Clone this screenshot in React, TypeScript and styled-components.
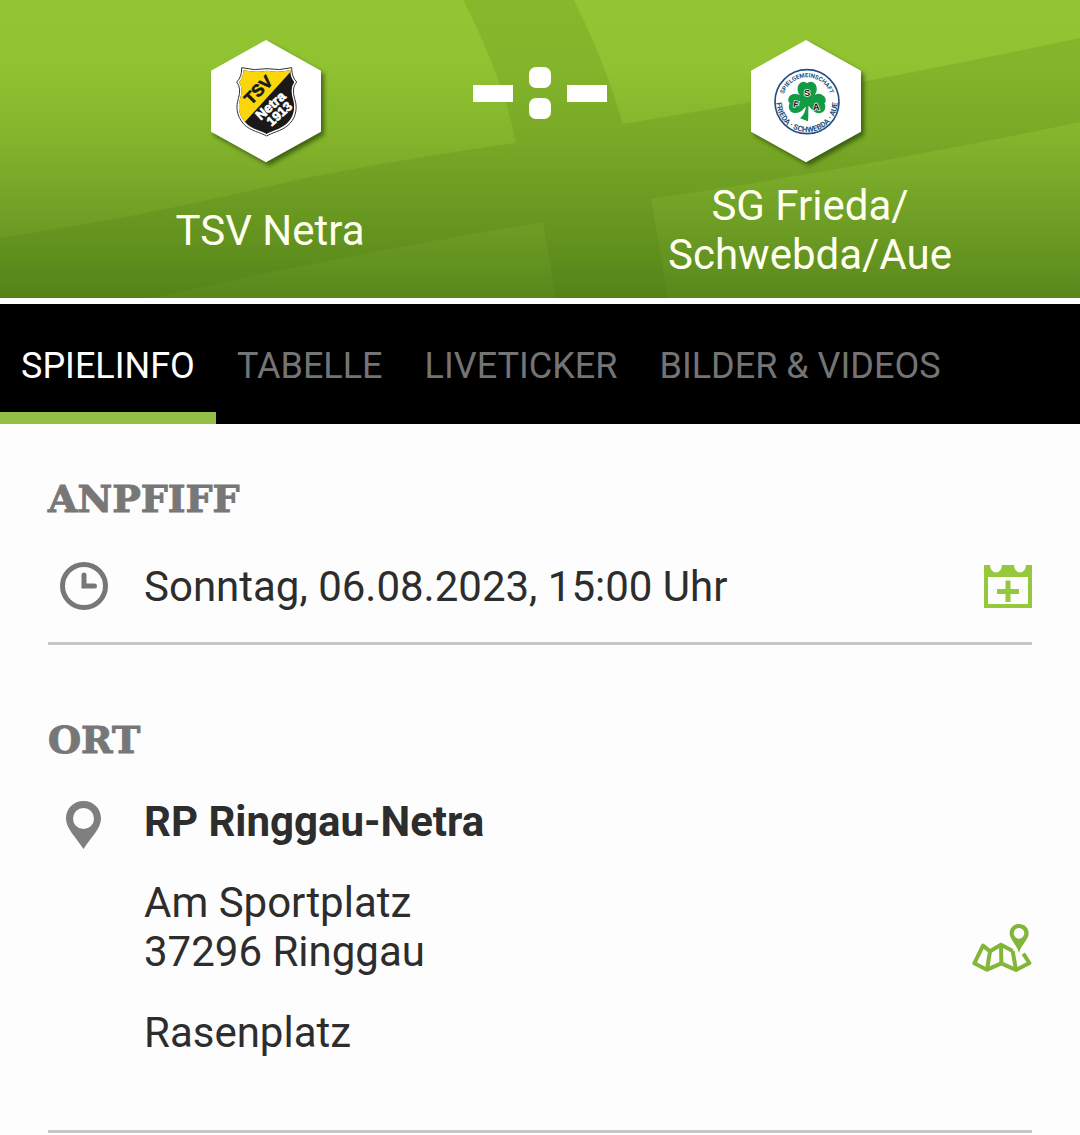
import React, { useState } from "react";
import styled, { createGlobalStyle } from "styled-components";

const GlobalStyle = createGlobalStyle`
  *, *::before, *::after { box-sizing: border-box; }
  body {
    margin: 0;
    background: #fdfdfd;
    color: #2d2d2d;
    font-family: Roboto, "Liberation Sans", sans-serif;
  }
  h2, p { margin: 0; }
  button {
    margin: 0;
    padding: 0;
    border: 0;
    background: none;
    font: inherit;
    color: inherit;
    cursor: pointer;
  }
`;

const MatchHeader = styled.header`
  position: relative;
  isolation: isolate;
  display: grid;
  grid-template-columns: 1fr 1fr;
  grid-template-rows: auto auto;
  row-gap: 19px;
  padding: 40px 0 19px;
  background: linear-gradient(#93c633 0%, #90c231 22%, #82b32b 48%, #73a326 68%, #639320 88%, #57861c 100%);
`;

const Backdrop = styled.svg`
  position: absolute;
  inset: 0;
  z-index: -1;
  width: 100%;
  height: 100%;
`;

const Crest = styled.svg<{ $column: number }>`
  display: block;
  justify-self: center;
  grid-row: 1;
  grid-column: ${(p) => p.$column};
  width: 120px;
  height: 122px;
  overflow: visible;
`;

const Hexagon = styled.polygon`
  fill: #fff;
  filter: drop-shadow(9px 10px 7px rgba(20, 50, 0, 0.6));
`;

const TeamName = styled.div<{ $column: number }>`
  grid-row: 2;
  grid-column: ${(p) => p.$column};
  display: flex;
  flex-direction: column;
  align-items: center;
  justify-content: center;
  color: #fffff0;
  font-size: 42px;
  line-height: 49px;
`;

const Score = styled.div`
  grid-row: 1;
  grid-column: 1 / -1;
  justify-self: center;
  display: flex;
  align-items: center;
  align-self: start;
  gap: 16px;
  margin-top: 27px;
`;

const Dash = styled.span`
  width: 40px;
  height: 17px;
  background: #fff;
`;

const Colon = styled.span`
  display: grid;
  gap: 10px;
`;

const Dot = styled.span`
  width: 22px;
  height: 21px;
  border-radius: 7px;
  background: #fff;
`;

const Tabs = styled.nav`
  display: flex;
  height: 126px;
  border-top: 6px solid #fff;
  background: #000;
`;

const Tab = styled.button<{ $active: boolean }>`
  && {
    padding: 16px 21px 0;
    border-bottom: 12px solid ${(p) => (p.$active ? "#93bf47" : "transparent")};
    color: ${(p) => (p.$active ? "#fff" : "#747474")};
    font-size: 36px;
    line-height: 42px;
    white-space: nowrap;
  }
`;

const Content = styled.main`
  padding: 51px 48px 0;
`;

const Section = styled.section`
  padding-bottom: 26px;
  border-bottom: 3px solid #c6c6c6;

  & + & {
    margin-top: 71px;
    padding-bottom: 31px;
  }
`;

const Heading = styled.h2`
  margin-bottom: 33px;
  color: #777;
  font-family: "DejaVu Serif", "Liberation Serif", serif;
  font-size: 38px;
  font-weight: 700;
  line-height: 48px;
  -webkit-text-stroke: 1px #777;
`;

const Row = styled.div`
  display: grid;
  grid-template-columns: 72px 1fr auto;
  column-gap: 24px;
  align-items: center;
  min-height: 60px;
`;

const LeadIcon = styled.svg<{ $top?: boolean }>`
  display: block;
  width: 48px;
  height: 48px;
  justify-self: center;
  align-self: ${(p) => (p.$top ? "start" : "center")};
  margin-top: ${(p) => (p.$top ? "4px" : "0")};
`;

const Details = styled.div`
  font-size: 42px;
  line-height: 49px;
`;

const Address = styled(Details)`
  display: grid;
  gap: 32px;
  padding-bottom: 42px;
`;

const Venue = styled.p`
  font-weight: 700;
`;

const ActionIcon = styled.svg<{ $width: number; $height: number }>`
  display: block;
  width: ${(p) => p.$width}px;
  height: ${(p) => p.$height}px;
`;

function NetraCrest() {
  return (
    <Crest $column={1} viewBox="30 29 360 366" role="img" aria-label="TSV Netra 1913">
      <defs>
        <clipPath id="shield">
          <path d="M130 119Q165 128 201 121Q238 128 271 119Q271 142 283 155Q269 173 279 206C289 240 276 266 259 281C240 297 216 301 200 311C183 301 156 297 137 277C114 252 114 227 120 206Q130 173 117 155Q130 142 130 119Z" />
        </clipPath>
      </defs>
      <Hexagon points="198,29 363,121 363,304 198,396 33,304 33,121" />
      <path
        d="M125 112Q163 122 201 115Q238 122 275 112Q275 140 290 155Q274 173 284 205C296 240 282 270 264 285C243 303 217 306 200 317C182 306 152 303 131 281C108 255 108 227 115 205Q125 173 110 155Q126 140 125 112Z"
        fill="#fff"
        stroke="#333"
        strokeWidth="3"
      />
      <g clipPath="url(#shield)">
        <path d="M100 100H300V330H100Z" fill="#1a1918" />
        <path d="M100 100H294L120 291H100Z" fill="#fbd60b" />
      </g>
      <g fontFamily="Liberation Sans, sans-serif" fontWeight="700" textAnchor="middle" strokeWidth="2">
        <text transform="translate(187 191) rotate(-45)" fontSize="50" fill="#1a1918" stroke="#1a1918">TSV</text>
        <text transform="translate(221 236) rotate(-42)" fontSize="41" fill="#fff" stroke="#fff">Netra</text>
        <text transform="translate(247 260) rotate(-42)" fontSize="39" fill="#fff" stroke="#fff">1913</text>
      </g>
    </Crest>
  );
}

function FriedaCrest() {
  return (
    <Crest $column={2} viewBox="30 29 360 366" role="img" aria-label="Spielgemeinschaft Frieda Schwebda Aue">
      <defs>
        <path id="upperArc" d="M128 214A73 73 0 0 1 274 214" />
        <path id="lowerArc" d="M112 190A92 92 0 1 0 290 190" />
      </defs>
      <Hexagon points="198,29 363,121 363,304 198,396 33,304 33,121" />
      <circle cx="201" cy="214" r="96" fill="#fff" stroke="#23517f" strokeWidth="5" />
      <g fontFamily="Roboto, sans-serif" textAnchor="middle" fill="#23517f" fontWeight="700">
        <text fontSize="18">
          <textPath href="#upperArc" startOffset="50%">SPIELGEMEINSCHAFT</textPath>
        </text>
        <text fontSize="23">
          <textPath href="#lowerArc" startOffset="50%">FRIEDA · SCHWEBDA · AUE</textPath>
        </text>
      </g>
      <path
        d="M200 213C190 204 177 194 175 180C173 160 189 151 201 161C214 151 230 160 228 180C226 194 211 204 204 213C215 200 230 188 244 194C257 200 258 212 251 219C258 229 253 246 238 247C221 248 211 230 204 219C202 240 204 254 202 270L184 263C194 254 200 240 200 219C193 232 180 248 163 246C149 244 145 229 151 219C143 211 146 198 158 194C174 189 190 201 200 213Z"
        fill="#119b45"
        stroke="#119b45"
        strokeWidth="4"
      />
      <g
        fontFamily="Liberation Sans, sans-serif"
        fontWeight="700"
        textAnchor="middle"
        fontSize="28"
        fill="#111"
        stroke="#fff"
        strokeWidth="4"
        paintOrder="stroke"
      >
        <text x="201" y="196">S</text>
        <text transform="translate(167 231) rotate(10)" fontSize="26">F</text>
        <text transform="translate(229 239) rotate(-4)">A</text>
      </g>
    </Crest>
  );
}

const TAB_LABELS = ["SPIELINFO", "TABELLE", "LIVETICKER", "BILDER & VIDEOS"];

export default function App() {
  const [active, setActive] = useState(0);

  return (
    <>
      <GlobalStyle />
      <MatchHeader>
        <Backdrop viewBox="0 0 1080 298" preserveAspectRatio="none" aria-hidden="true">
          <path
            d="M463 0H574Q605 62 623 124Q860 85 1080 38V122Q860 168 651 199L668 298H556L543 222Q340 256 150 298H0V238Q150 216 300 179Q410 158 516 143Q504 80 463 0Z"
            fill="#44720f"
            fillOpacity="0.16"
          />
        </Backdrop>
        <NetraCrest />
        <Score role="img" aria-label="Noch kein Ergebnis">
          <Dash />
          <Colon>
            <Dot />
            <Dot />
          </Colon>
          <Dash />
        </Score>
        <FriedaCrest />
        <TeamName $column={1}>TSV Netra</TeamName>
        <TeamName $column={2}>
          <span>SG Frieda/</span>
          <span>Schwebda/Aue</span>
        </TeamName>
      </MatchHeader>

      <Tabs>
        {TAB_LABELS.map((label, i) => (
          <Tab key={label} type="button" $active={i === active} onClick={() => setActive(i)}>
            {label}
          </Tab>
        ))}
      </Tabs>

      <Content>
        <Section>
          <Heading>ANPFIFF</Heading>
          <Row>
            <LeadIcon viewBox="0 0 48 48" fill="none" stroke="#777" strokeWidth="5" strokeLinecap="round" aria-hidden="true">
              <circle cx="24" cy="24" r="21.5" />
              <path d="M24 13V24H34.500" />
            </LeadIcon>
            <Details>Sonntag, 06.08.2023, 15:00 Uhr</Details>
            <button type="button" aria-label="Zum Kalender hinzufügen">
              <ActionIcon $width={48} $height={43} viewBox="0 0 48 43" aria-hidden="true">
                <path
                  fill="#95c83d"
                  fillRule="evenodd"
                  d="M0 0H6A6 7.500 0 0 0 18 0H30A6 7.500 0 0 0 42 0H48V43H0ZM4 12V39H44V12ZM21.500 15.500H26.500V24H35V29H26.500V37H21.500V29H13V24H21.500Z"
                />
              </ActionIcon>
            </button>
          </Row>
        </Section>

        <Section>
          <Heading>ORT</Heading>
          <Row>
            <LeadIcon $top viewBox="0 0 48 48" aria-hidden="true">
              <path
                fill="#7f7f7f"
                fillRule="evenodd"
                d="M23.500 0C33.500 0 41 7.500 41 17.500C41 28 31 36 23.500 48C16 36 6 28 6 17.500C6 7.500 13.500 0 23.500 0ZM23.500 7A10.500 10.500 0 1 0 23.500 28A10.500 10.500 0 1 0 23.500 7Z"
              />
            </LeadIcon>
            <Address>
              <Venue>RP Ringgau-Netra</Venue>
              <p>
                Am Sportplatz
                <br />
                37296 Ringgau
              </p>
              <p>Rasenplatz</p>
            </Address>
            <button type="button" aria-label="Karte öffnen">
              <ActionIcon $width={60} $height={48} viewBox="36 42 180 144" aria-hidden="true">
                <g fill="none" stroke="#82b638" strokeWidth="12" strokeLinejoin="round">
                  <path d="M158 123L123 104L90 124L69 107L43 160L81 179L124 160L168 180L208 159L190 131" />
                  <path d="M90 124L81 179M123 104L124 160M158 123L168 180" />
                </g>
                <path
                  fill="#82b638"
                  fillRule="evenodd"
                  d="M177 42C194 42 206 54 206 70C206 88 186 102 177 128C168 102 149 88 149 70C149 54 161 42 177 42ZM177 54A16 16 0 1 0 177 86A16 16 0 1 0 177 54Z"
                />
              </ActionIcon>
            </button>
          </Row>
        </Section>
      </Content>
    </>
  );
}
